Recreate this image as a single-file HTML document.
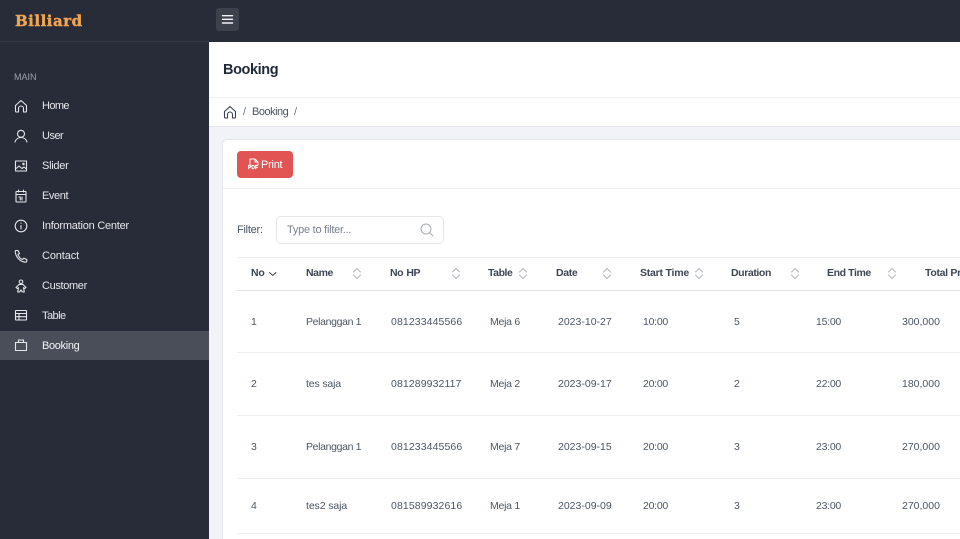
<!DOCTYPE html>
<html><head><meta charset="utf-8"><style>
*{box-sizing:border-box}
html,body{margin:0;padding:0;width:960px;height:539px;overflow:hidden;background:#f1f3f8}
#w{position:relative;width:960px;height:539px;overflow:hidden;background:#f1f3f8;font-family:"Liberation Sans",sans-serif;color:#4b5563;filter:blur(.3px)}
.a{position:absolute;white-space:nowrap}
svg{position:absolute;fill:none;stroke-linecap:round;stroke-linejoin:round}
.nav{font-size:11px;color:#e5e7eb;left:42px;line-height:14px}
.ic{stroke:#e5e7eb;stroke-width:1.1}
.th{font-size:10.5px;font-weight:bold;color:#3d4654;top:267px;line-height:13px}
.td{font-size:10.5px;color:#4b5563;line-height:13px}
.n{letter-spacing:.1px}.t{letter-spacing:-.25px}.mj{letter-spacing:-.25px}
.hl{position:absolute;left:237px;width:723px;height:1px;background:#eceef1}
.s{stroke:#adb2ba;stroke-width:.9;width:10px;height:13px;top:267px}
</style></head><body><div id="w">
<div class="a" style="left:0;top:0;width:960px;height:42px;background:#282c38"></div>
<div class="a" style="left:0;top:41px;width:209px;height:1px;background:#343945"></div>
<div class="a" style="left:0;top:42px;width:209px;height:497px;background:#282c38"></div>
<div class="a" style="left:15px;top:12.500px;font:bold 15px/16px 'DejaVu Serif',serif;color:#f0a552;letter-spacing:.5px;-webkit-text-stroke:.4px #f0a552">Billiard</div>
<div class="a" style="left:216px;top:8px;width:23px;height:23px;border-radius:3px;background:#3c414c"></div>
<svg style="left:216px;top:8px" width="23" height="23" stroke="#f3f4f6" stroke-width="1.4"><path d="M6.500 7.700h10M6.500 11.300h10M6.500 15h10"/></svg>

<div class="a" style="left:14px;top:71px;font-size:9px;line-height:12px;color:#9ca3af">MAIN</div>
<div class="a" style="left:0;top:331px;width:209px;height:29px;background:#4a4e58"></div>

<svg class="ic" style="left:14px;top:99px" width="14" height="14"><path d="M1.500 6.500 7 1.500l5.500 5V12a1 1 0 0 1-1 1H9.500V9.500a2.500 2.500 0 0 0-5 0V13H2.500a1 1 0 0 1-1-1z"/></svg>
<div class="a nav" style="top:99px;letter-spacing:-.6px">Home</div>
<svg class="ic" style="left:14px;top:129px" width="14" height="14"><circle cx="7" cy="4.800" r="3.500"/><path d="M1 13c.8-2.600 3-4.500 6-4.500s5.200 1.900 6 4.500"/></svg>
<div class="a nav" style="top:129px;letter-spacing:-.5px">User</div>
<svg class="ic" style="left:14px;top:159px" width="14" height="14"><rect x="1.500" y="2" width="11" height="10"/><path d="M1.500 10 5 7l3 2.500L10 8l2.500 2"/><circle cx="9.500" cy="5" r=".7"/></svg>
<div class="a nav" style="top:159px;letter-spacing:-.27px">Slider</div>
<svg class="ic" style="left:14px;top:189px" width="14" height="14"><rect x="2" y="2.500" width="10" height="10.500" rx=".5"/><path d="M2 5.500h10M4.500 1v2M9.500 1v2M5 8h1.300v3M8 8v3"/></svg>
<div class="a nav" style="top:189px;letter-spacing:-.4px">Event</div>
<svg class="ic" style="left:14px;top:219px" width="14" height="14"><circle cx="7" cy="7" r="5.800"/><path d="M7 6.500v3.500M7 4v.3"/></svg>
<div class="a nav" style="top:219px;letter-spacing:-.23px">Information Center</div>
<svg class="ic" style="left:14px;top:249px" width="14" height="14"><path d="M2 1.500h2l1.500 3-1.500 1c.8 2.500 2.500 4.200 4.500 5l1.300-1.300 3 1.300V12c0 .8-.8 1.300-1.600 1.200C6 12.700 1.700 8 1.300 2.800 1.200 2.100 1.400 1.500 2 1.500z"/></svg>
<div class="a nav" style="top:249px;letter-spacing:-.13px">Contact</div>
<svg class="ic" style="left:14px;top:279px" width="14" height="15"><circle cx="7" cy="2.800" r="1.800"/><path d="M5 5.500h4l3 3-1.500 1-1-.8.800 4.300H8.500L7 11l-1.500 2H3.700l.8-4.300-1 .8L2 8.500z"/></svg>
<div class="a nav" style="top:279px;letter-spacing:-.35px">Customer</div>
<svg class="ic" style="left:14px;top:308px" width="14" height="14"><rect x="1.500" y="2.500" width="11" height="9.500" rx=".5"/><path d="M1.500 5.500h11M1.500 8.700h11M5 5.500V12"/></svg>
<div class="a nav" style="top:308.500px;letter-spacing:-.55px">Table</div>
<svg class="ic" style="left:14px;top:338px" width="14" height="14"><path d="M1.500 4.500h11V12.500h-11zM4.500 4.500V2h5v2.500"/></svg>
<div class="a nav" style="top:338.500px;color:#f3f4f6;letter-spacing:-.34px">Booking</div>

<div class="a" style="left:209px;top:42px;width:751px;height:55px;background:#fff"></div>
<div class="a" style="left:223px;top:61.500px;font-size:14.500px;font-weight:bold;line-height:17px;color:#1f2937;letter-spacing:-.4px">Booking</div>
<div class="a" style="left:209px;top:97px;width:751px;height:30px;background:#fff;border-top:1px solid #eef0f3;border-bottom:1px solid #e2e4e9"></div>
<svg style="left:223px;top:105px;stroke:#374151;stroke-width:1.100" width="14" height="14"><path d="M1.500 6.500 7 1.500l5.500 5V12a1 1 0 0 1-1 1H9.500V9.500a2.500 2.500 0 0 0-5 0V13H2.500a1 1 0 0 1-1-1z"/></svg>
<div class="a" style="left:243px;top:105.500px;font-size:11px;line-height:13px;color:#6b7280">/</div>
<div class="a" style="left:252px;top:105.500px;font-size:11px;line-height:13px;color:#4b5563;letter-spacing:-.5px">Booking</div>
<div class="a" style="left:294px;top:105.500px;font-size:11px;line-height:13px;color:#6b7280">/</div>

<div class="a" style="left:222px;top:139px;width:760px;height:420px;background:#fff;border:1px solid #e4e6eb;border-radius:5px"></div>
<div class="a" style="left:223px;top:188px;width:737px;height:1px;background:#eef0f3"></div>
<div class="a" style="left:237px;top:151px;width:56px;height:27px;border-radius:4px;background:#e25353"></div>
<svg style="left:248px;top:157.500px;stroke:#fff;stroke-width:1" width="12" height="13"><path d="M2 7V1h5l3 3v3M7 1v3h3"/></svg>
<div class="a" style="left:248px;top:164.500px;font:bold 5px/6px 'Liberation Sans',sans-serif;color:#fff;-webkit-text-stroke:.2px #fff">PDF</div>
<div class="a" style="left:261px;top:158.500px;font-size:11px;line-height:13px;color:#fff;letter-spacing:-.25px">Print</div>

<div class="a" style="left:237px;top:223.500px;font-size:11px;line-height:13px;color:#4b5563;letter-spacing:-.25px">Filter:</div>
<div class="a" style="left:276px;top:216px;width:168px;height:28px;background:#fff;border:1px solid #e5e7eb;border-radius:5px"></div>
<div class="a" style="left:287px;top:223.500px;font-size:11px;line-height:13px;color:#7b818c;letter-spacing:-.25px">Type to filter...</div>
<svg style="left:420px;top:223px;stroke:#a9adb5;stroke-width:1" width="14" height="14"><circle cx="6" cy="6" r="5"/><path d="M9.800 9.800 13 13"/></svg>

<div class="hl" style="top:257px"></div>
<div class="hl" style="top:290px;background:#dcdfe4"></div>
<div class="hl" style="top:352px"></div>
<div class="hl" style="top:415px"></div>
<div class="hl" style="top:478px"></div>
<div class="hl" style="top:533px"></div>

<div class="a th" style="left:251px;letter-spacing:-.2px">No</div>
<svg style="left:268px;top:271px;stroke:#374151;stroke-width:.9" width="10" height="7"><path d="M1.500 1.500 4.750 4.500 8 1.500"/></svg>
<div class="a th" style="left:306px;letter-spacing:-.4px">Name</div>
<svg class="s" style="left:352px"><path d="M1.500 5 5 1.500 8.500 5M1.500 8 5 11.500 8.500 8"/></svg>
<div class="a th" style="left:390px;letter-spacing:-.5px;word-spacing:1px">No HP</div>
<svg class="s" style="left:450.500px"><path d="M1.500 5 5 1.500 8.500 5M1.500 8 5 11.500 8.500 8"/></svg>
<div class="a th" style="left:488px;letter-spacing:-.45px">Table</div>
<svg class="s" style="left:517.500px"><path d="M1.500 5 5 1.500 8.500 5M1.500 8 5 11.500 8.500 8"/></svg>
<div class="a th" style="left:556px;letter-spacing:-.35px">Date</div>
<svg class="s" style="left:602px"><path d="M1.500 5 5 1.500 8.500 5M1.500 8 5 11.500 8.500 8"/></svg>
<div class="a th" style="left:640px;letter-spacing:-.22px">Start Time</div>
<svg class="s" style="left:693.500px"><path d="M1.500 5 5 1.500 8.500 5M1.500 8 5 11.500 8.500 8"/></svg>
<div class="a th" style="left:731px;letter-spacing:-.4px">Duration</div>
<svg class="s" style="left:789.500px"><path d="M1.500 5 5 1.500 8.500 5M1.500 8 5 11.500 8.500 8"/></svg>
<div class="a th" style="left:827px;letter-spacing:-.4px">End Time</div>
<svg class="s" style="left:886.500px"><path d="M1.500 5 5 1.500 8.500 5M1.500 8 5 11.500 8.500 8"/></svg>
<div class="a th" style="left:925px;letter-spacing:-.3px">Total Price</div>

<div class="a td" style="left:251px;top:315.500px">1</div><div class="a td" style="left:306px;top:315.500px;letter-spacing:-.35px">Pelanggan 1</div><div class="a td n" style="left:391px;top:315.500px">081233445566</div><div class="a td mj" style="left:490px;top:315.500px">Meja 6</div><div class="a td" style="left:558px;top:315.500px">2023-10-27</div><div class="a td t" style="left:643px;top:315.500px">10:00</div><div class="a td" style="left:734px;top:315.500px">5</div><div class="a td t" style="left:816px;top:315.500px">15:00</div><div class="a td" style="left:902px;top:315.500px">300,000</div>
<div class="a td" style="left:251px;top:378px">2</div><div class="a td" style="left:306px;top:378px;letter-spacing:-.15px">tes saja</div><div class="a td n" style="left:391px;top:378px">081289932117</div><div class="a td mj" style="left:490px;top:378px">Meja 2</div><div class="a td" style="left:558px;top:378px">2023-09-17</div><div class="a td t" style="left:643px;top:378px">20:00</div><div class="a td" style="left:734px;top:378px">2</div><div class="a td t" style="left:816px;top:378px">22:00</div><div class="a td" style="left:902px;top:378px">180,000</div>
<div class="a td" style="left:251px;top:441px">3</div><div class="a td" style="left:306px;top:441px;letter-spacing:-.35px">Pelanggan 1</div><div class="a td n" style="left:391px;top:441px">081233445566</div><div class="a td mj" style="left:490px;top:441px">Meja 7</div><div class="a td" style="left:558px;top:441px">2023-09-15</div><div class="a td t" style="left:643px;top:441px">20:00</div><div class="a td" style="left:734px;top:441px">3</div><div class="a td t" style="left:816px;top:441px">23:00</div><div class="a td" style="left:902px;top:441px">270,000</div>
<div class="a td" style="left:251px;top:500px">4</div><div class="a td" style="left:306px;top:500px;letter-spacing:-.1px">tes2 saja</div><div class="a td n" style="left:391px;top:500px">081589932616</div><div class="a td mj" style="left:490px;top:500px">Meja 1</div><div class="a td" style="left:558px;top:500px">2023-09-09</div><div class="a td t" style="left:643px;top:500px">20:00</div><div class="a td" style="left:734px;top:500px">3</div><div class="a td t" style="left:816px;top:500px">23:00</div><div class="a td" style="left:902px;top:500px">270,000</div>
</div></body></html>
